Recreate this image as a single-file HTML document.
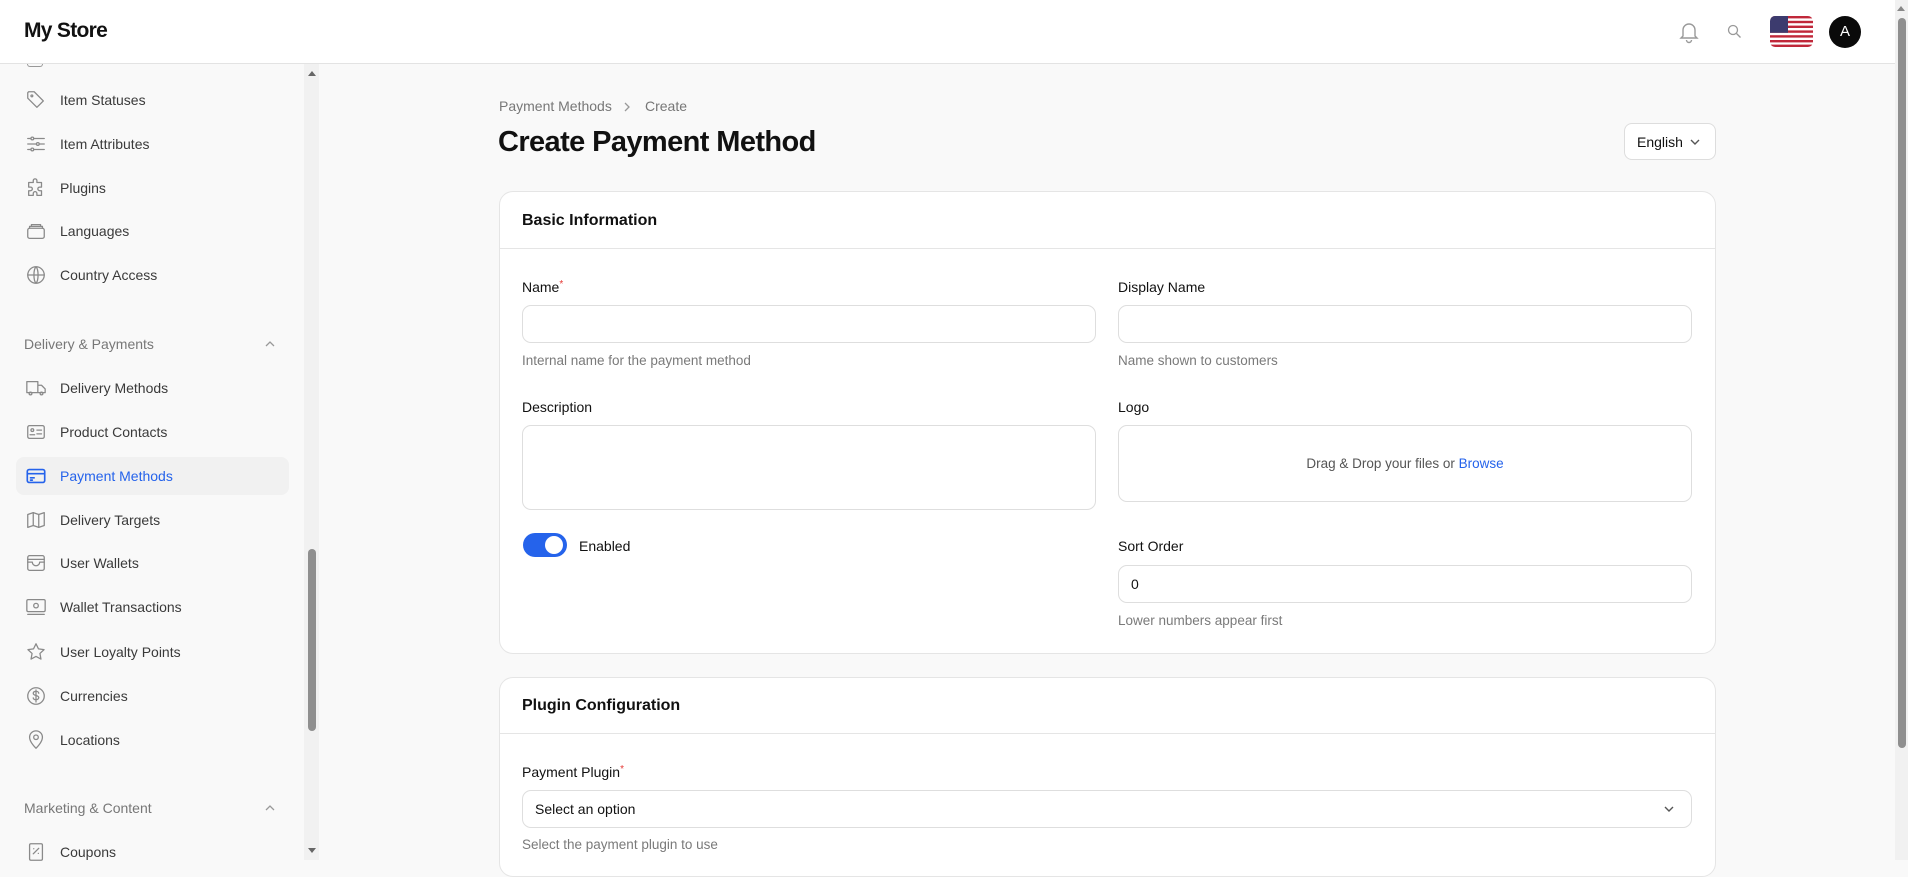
<!DOCTYPE html>
<html><head><meta charset="utf-8"><style>
*{box-sizing:border-box;margin:0;padding:0}
body{width:1908px;height:860px;overflow:hidden;background:#f9f9f9;font-family:"Liberation Sans",sans-serif;color:#111;position:relative}
.a{position:absolute}
.hdr{left:0;top:0;width:1895px;height:64px;background:#fff;border-bottom:1px solid #e3e3e3}
.side{left:0;top:64px;width:304px;height:796px;background:#f9f9f9}
.it{position:absolute;left:0;width:290px;height:38px;display:flex;align-items:center;font-size:14px;color:#3a3a3a}
.it svg{position:absolute;left:25px;width:22px;height:22px;fill:none;stroke:#8a8a8a;stroke-width:1.4;stroke-linecap:round;stroke-linejoin:round}
.it span{position:absolute;left:60px}
.sec{position:absolute;left:24px;font-size:14px;color:#777}
.chev{position:absolute;left:264px;width:12px;height:12px}
.card{position:absolute;left:499px;width:1217px;background:#fff;border:1px solid #e5e5e5;border-radius:14px}
.ct{position:absolute;left:22px;font-size:16px;font-weight:bold}
.hr{position:absolute;left:0;right:0;height:1px;background:#e5e5e5}
.lbl{position:absolute;font-size:14px;color:#111}
.help{position:absolute;font-size:13.5px;color:#7a7a7a}
.inp{position:absolute;height:38px;border:1px solid #dedede;border-radius:9px;background:#fff}
.req{color:#e53935;font-size:10px;vertical-align:top}
</style></head><body>
<div class="a hdr">
  <div class="a" style="left:24px;top:19px;font-size:21px;font-weight:bold;letter-spacing:-0.7px">My Store</div>
  <svg class="a" style="left:1678px;top:20px" width="22" height="24" viewBox="0 0 22 24" fill="none" stroke="#999" stroke-width="1.4"><path d="M5 16V10a6 6 0 0 1 12 0v6l2 2H3z"/><path d="M8.5 20a2.5 2.5 0 0 0 5 0"/></svg>
  <svg class="a" style="left:1727px;top:24px" width="15" height="15" viewBox="0 0 15 15" fill="none" stroke="#999" stroke-width="1.3"><circle cx="6" cy="6" r="4.5"/><path d="M9.5 9.5l4 4"/></svg>
  <svg class="a" style="left:1770px;top:16px;border-radius:5px" width="43" height="31" viewBox="0 0 43 31"><rect width="43" height="31" fill="#fff"/><g fill="#c0283a"><rect y="0" width="43" height="2.4"/><rect y="4.8" width="43" height="2.4"/><rect y="9.6" width="43" height="2.4"/><rect y="14.4" width="43" height="2.4"/><rect y="19.2" width="43" height="2.4"/><rect y="24" width="43" height="2.4"/><rect y="28.6" width="43" height="2.4"/></g><rect width="18" height="16.8" fill="#3c3b6e"/></svg>
  <div class="a" style="left:1829px;top:16px;width:32px;height:32px;border-radius:50%;background:#0a0a0a;color:#fff;font-size:15px;text-align:center;line-height:32px">A</div>
</div>
<div class="a" style="left:1895px;top:0;width:13px;height:860px;background:#f1f1f1"></div>
<div class="a" style="left:1898px;top:18px;width:8px;height:730px;background:#8f8f8f;border-radius:4px"></div>
<div class="a" style="left:1897px;top:6px;width:0;height:0;border-left:4px solid transparent;border-right:4px solid transparent;border-bottom:5px solid #888"></div>

<div class="a side">
  <div class="a" style="left:304px;top:0;width:15px;height:796px;background:#f1f1f1"></div>
  <div class="a" style="left:308px;top:485px;width:8px;height:182px;background:#8f8f8f;border-radius:4px"></div>
  <div class="a" style="left:308px;top:7px;border-left:4px solid transparent;border-right:4px solid transparent;border-bottom:5px solid #666"></div>
  <div class="a" style="left:308px;top:784px;border-left:4px solid transparent;border-right:4px solid transparent;border-top:5px solid #666"></div>
  <div class="a" style="left:27px;top:0;width:16px;height:3px;border:1.4px solid #999;border-top:none;border-radius:0 0 3px 3px"></div>
</div>
<div class="it" style="top:81px"><svg viewBox="0 0 24 24"><path d="M3 4v6l10 10 7-7L10 3H4z"/><circle cx="7.5" cy="7.5" r="1"/></svg><span>Item Statuses</span></div>
<div class="it" style="top:125px"><svg viewBox="0 0 24 24"><path d="M3 6h18M3 12h18M3 18h18"/><circle cx="8" cy="6" r="1.5" fill="#f9f9f9"/><circle cx="14" cy="12" r="1.5" fill="#f9f9f9"/><circle cx="8" cy="18" r="1.5" fill="#f9f9f9"/></svg><span>Item Attributes</span></div>
<div class="it" style="top:169px"><svg viewBox="0 0 24 24"><path d="M9 4a2 2 0 0 1 4 0v2h5v5h-2a2 2 0 0 0 0 4h2v5h-5v-2a2 2 0 0 0-4 0v2H4v-5h2a2 2 0 0 0 0-4H4V6h5z"/></svg><span>Plugins</span></div>
<div class="it" style="top:212px"><svg viewBox="0 0 24 24"><rect x="3" y="9" width="18" height="11" rx="2"/><path d="M5 9V7h14v2M7 7V5h10v2"/></svg><span>Languages</span></div>
<div class="it" style="top:256px"><svg viewBox="0 0 24 24"><circle cx="12" cy="12" r="9"/><path d="M3 12h18M12 3c3 3 3 15 0 18M12 3c-3 3-3 15 0 18"/></svg><span>Country Access</span></div>
<div class="sec" style="top:336px">Delivery &amp; Payments</div>
<svg class="chev" style="top:338px" viewBox="0 0 12 12" fill="none" stroke="#999" stroke-width="1.3"><path d="M2 8l4-4 4 4"/></svg>
<div class="it" style="top:369px"><svg viewBox="0 0 24 24"><path d="M2 5h12v12H2zM14 9h4l4 4v4h-8"/><circle cx="6" cy="18" r="1.5"/><circle cx="18" cy="18" r="1.5"/></svg><span>Delivery Methods</span></div>
<div class="it" style="top:413px"><svg viewBox="0 0 24 24"><rect x="3" y="5" width="18" height="14" rx="2"/><circle cx="8" cy="10" r="1.5"/><path d="M5.5 15h5M13 10h5M13 14h5"/></svg><span>Product Contacts</span></div>
<div class="a" style="left:16px;top:457px;width:273px;height:38px;background:#f1f1f1;border-radius:8px"></div>
<div class="it" style="top:457px;color:#2563eb"><svg viewBox="0 0 24 24" style="stroke:#2563eb;stroke-width:1.8"><rect x="2.5" y="5" width="19" height="14" rx="2"/><path d="M2.5 9.5h19M6 14h4M6 16.5h2"/></svg><span>Payment Methods</span></div>
<div class="it" style="top:501px"><svg viewBox="0 0 24 24"><path d="M3 6l6-2 6 2 6-2v14l-6 2-6-2-6 2z"/><path d="M9 4v14M15 6v14"/></svg><span>Delivery Targets</span></div>
<div class="it" style="top:544px"><svg viewBox="0 0 24 24"><rect x="3" y="4" width="18" height="16" rx="2"/><path d="M3 8h18M3 11h5a4 4 0 0 0 8 0h5"/></svg><span>User Wallets</span></div>
<div class="it" style="top:588px"><svg viewBox="0 0 24 24"><rect x="2" y="4" width="20" height="13" rx="1.5"/><circle cx="12" cy="10.5" r="2.5"/><path d="M3 20h18"/></svg><span>Wallet Transactions</span></div>
<div class="it" style="top:633px"><svg viewBox="0 0 24 24"><path d="M12 3l2.7 5.6 6.1.8-4.5 4.2 1.1 6.1L12 16.8l-5.4 2.9 1.1-6.1-4.5-4.2 6.1-.8z"/></svg><span>User Loyalty Points</span></div>
<div class="it" style="top:677px"><svg viewBox="0 0 24 24"><circle cx="12" cy="12" r="9"/><path d="M15 9c0-1.2-1.3-2-3-2s-3 .8-3 2.2c0 3 6 1.6 6 4.6 0 1.3-1.3 2.2-3 2.2s-3-.8-3-2M12 5.5v13"/></svg><span>Currencies</span></div>
<div class="it" style="top:721px"><svg viewBox="0 0 24 24"><path d="M12 21s-7-6.5-7-12a7 7 0 0 1 14 0c0 5.5-7 12-7 12z"/><circle cx="12" cy="9" r="2.5"/></svg><span>Locations</span></div>
<div class="sec" style="top:800px">Marketing &amp; Content</div>
<svg class="chev" style="top:802px" viewBox="0 0 12 12" fill="none" stroke="#999" stroke-width="1.3"><path d="M2 8l4-4 4 4"/></svg>
<div class="it" style="top:833px"><svg viewBox="0 0 24 24"><rect x="5" y="3" width="14" height="18" rx="1.5"/><path d="M9 14l6-6M9.5 8.5h.1M14.5 13.5h.1"/></svg><span>Coupons</span></div>

<div class="a" style="left:499px;top:98px;font-size:14px;color:#777">Payment Methods</div>
<svg class="a" style="left:622px;top:101px" width="10" height="12" viewBox="0 0 10 12" fill="none" stroke="#999" stroke-width="1.3"><path d="M3 2l4 4-4 4"/></svg>
<div class="a" style="left:645px;top:98px;font-size:14px;color:#777">Create</div>
<div class="a" style="left:498px;top:126px;font-size:29px;font-weight:bold;letter-spacing:-0.6px">Create Payment Method</div>
<div class="a" style="left:1624px;top:123px;width:92px;height:37px;background:#fff;border:1px solid #ddd;border-radius:8px;font-size:14px;line-height:36px;padding-left:12px">English</div>
<svg class="a" style="left:1689px;top:137px" width="12" height="10" viewBox="0 0 12 10" fill="none" stroke="#555" stroke-width="1.4"><path d="M2 3l4 4 4-4"/></svg>

<div class="card" style="top:191px;height:463px">
  <div class="ct" style="top:20px">Basic Information</div>
  <div class="hr" style="top:56px"></div>
  <div class="lbl" style="left:22px;top:87px">Name<span class="req">*</span></div>
  <div class="inp" style="left:22px;top:113px;width:574px"></div>
  <div class="help" style="left:22px;top:161px">Internal name for the payment method</div>
  <div class="lbl" style="left:618px;top:87px">Display Name</div>
  <div class="inp" style="left:618px;top:113px;width:574px"></div>
  <div class="help" style="left:618px;top:161px">Name shown to customers</div>
  <div class="lbl" style="left:22px;top:207px">Description</div>
  <div class="inp" style="left:22px;top:233px;width:574px;height:85px"></div>
  <div class="lbl" style="left:618px;top:207px">Logo</div>
  <div class="inp" style="left:618px;top:233px;width:574px;height:77px;text-align:center;line-height:75px;font-size:13.5px;color:#555">Drag &amp; Drop your files or <span style="color:#2563eb">Browse</span></div>
  <div class="a" style="left:23px;top:341px;width:44px;height:24px;border-radius:12px;background:#2563eb"><div class="a" style="left:22px;top:3px;width:18px;height:18px;border-radius:50%;background:#fff"></div></div>
  <div class="lbl" style="left:79px;top:346px">Enabled</div>
  <div class="lbl" style="left:618px;top:346px">Sort Order</div>
  <div class="inp" style="left:618px;top:373px;width:574px;font-size:14px;line-height:36px;padding-left:12px">0</div>
  <div class="help" style="left:618px;top:421px">Lower numbers appear first</div>
</div>

<div class="card" style="top:677px;height:200px">
  <div class="ct" style="top:19px">Plugin Configuration</div>
  <div class="hr" style="top:55px"></div>
  <div class="lbl" style="left:22px;top:86px">Payment Plugin<span class="req">*</span></div>
  <div class="inp" style="left:22px;top:112px;width:1170px;font-size:14px;line-height:36px;padding-left:12px">Select an option</div>
  <svg class="a" style="left:1163px;top:126px" width="12" height="10" viewBox="0 0 12 10" fill="none" stroke="#555" stroke-width="1.4"><path d="M2 3l4 4 4-4"/></svg>
  <div class="help" style="left:22px;top:159px">Select the payment plugin to use</div>
</div>
</body></html>
